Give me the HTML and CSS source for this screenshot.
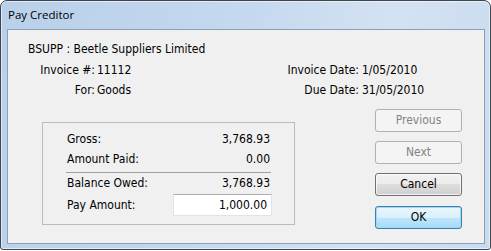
FILE: index.html
```html
<!DOCTYPE html>
<html>
<head>
<meta charset="utf-8">
<link rel="stylesheet" href="styles.css">
</head>
<body>
<div class="window">
  <div class="titlebar">Pay Creditor</div>
  <div class="client">
    <div class="creditor">BSUPP : Beetle Suppliers Limited</div>
    <div class="info">
      <div class="lbl">Invoice #:</div>
      <div class="val">11112</div>
      <div class="lbl">Invoice Date:</div>
      <div class="val val2">1/05/2010</div>
      <div class="lbl">For:</div>
      <div class="val">Goods</div>
      <div class="lbl">Due Date:</div>
      <div class="val val2">31/05/2010</div>
    </div>
    <div class="lower">
      <div class="group">
        <div class="row"><span>Gross:</span><span>3,768.93</span></div>
        <div class="row"><span>Amount Paid:</span><span>0.00</span></div>
        <div class="sep"></div>
        <div class="row"><span>Balance Owed:</span><span>3,768.93</span></div>
        <div class="row pay"><span>Pay Amount:</span><span class="input">1,000.00</span></div>
      </div>
      <div class="buttons">
        <div class="btn disabled">Previous</div>
        <div class="btn disabled">Next</div>
        <div class="btn">Cancel</div>
        <div class="btn default">OK</div>
      </div>
    </div>
  </div>
</div>
</body>
</html>
```
FILE: styles.css
```css
html, body {
  margin: 0;
  padding: 0;
  background: #ffffff;
}
body {
  font-family: "DejaVu Sans Condensed", "DejaVu Sans", sans-serif;
  font-stretch: condensed;
  font-size: 12px;
  color: #000;
}
.window {
  width: 491px;
  height: 250px;
  box-sizing: border-box;
  border: 1px solid #3d4650;
  border-radius: 7px 7px 3px 3px;
  background: linear-gradient(100deg, #b9d0ea 0%, #c4d8ee 45%, #d3e2f2 75%, #c9dbef 100%);
  padding: 0 5px 5px 6px;
  display: flex;
  flex-direction: column;
  box-shadow: inset 0 0 0 1px rgba(255,255,255,0.55);
}
.titlebar {
  height: 28px;
  box-sizing: border-box;
  padding: 6px 0 0 1px;
  font-family: "Open Sans", "Liberation Sans", sans-serif;
  font-stretch: normal;
  font-size: 11.5px;
  line-height: 16px;
  color: #000;
}
.client {
  flex: 1;
  background: #f0f0f0;
  border: 1px solid #8b9fb6;
  display: flex;
  flex-direction: column;
}
.creditor {
  padding: 12px 0 0 20px;
  line-height: 14px;
}
.info {
  display: grid;
  grid-template-columns: 87px 184px 80px auto;
  grid-auto-rows: 20px;
  line-height: 20px;
  margin-top: 4px;
}
.lbl {
  text-align: right;
}
.val {
  padding-left: 2px;
}
.val2 {
  padding-left: 3px;
}
.lower {
  display: flex;
  align-items: flex-start;
  padding-left: 34px;
  margin-top: 9px;
}
.group {
  width: 253px;
  box-sizing: border-box;
  border: 1px solid #bcbcbc;
  margin-top: 13px;
  padding: 6px 24px 8px 24px;
}
.row {
  display: flex;
  justify-content: space-between;
  align-items: center;
  height: 20px;
  line-height: 20px;
}
.sep {
  height: 1px;
  background: #a0a0a0;
  margin: 3px -1px 0 -1px;
}
.row.pay {
  height: 22px;
  margin-top: 1px;
}
.input {
  width: 99px;
  height: 22px;
  box-sizing: border-box;
  background: #fff;
  border: 1px solid #e2e3ea;
  border-top-color: #abadb3;
  text-align: right;
  padding-right: 4px;
  line-height: 20px;
  margin-right: -2px;
}
.buttons {
  margin-left: 80px;
  display: flex;
  flex-direction: column;
  gap: 9px;
}
.btn {
  width: 87px;
  height: 23px;
  box-sizing: border-box;
  border: 1px solid #707070;
  border-radius: 3px;
  text-align: center;
  line-height: 21px;
  background: linear-gradient(#f2f2f2 0%, #ebebeb 50%, #dddddd 50%, #cfcfcf 100%);
  box-shadow: inset 0 0 0 1px rgba(255,255,255,0.7);
}
.btn.disabled {
  border-color: #adb2b5;
  background: #f4f4f4;
  color: #838383;
  box-shadow: none;
}
.btn.default {
  border-color: #3c7fb1;
  background: linear-gradient(#eaf6fd 0%, #d9f0fc 50%, #bee6fd 50%, #a7d9f5 100%);
  box-shadow: inset 0 0 0 1px #a0d8f3;
  margin-top: 1px;
}
```
